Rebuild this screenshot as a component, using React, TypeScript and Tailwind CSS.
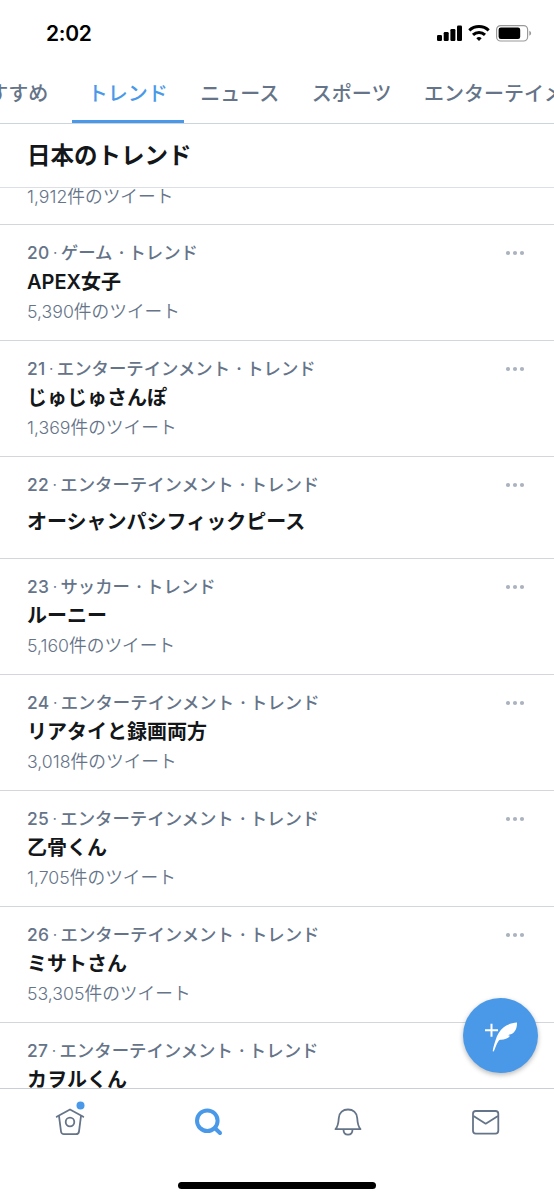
interface Trend {
  rank: number
  category: string
  name: string
  count?: string
}

const TABS = ['おすすめ', 'トレンド', 'ニュース', 'スポーツ', 'エンターテイメント']

const TRENDS: Trend[] = [
  { rank: 20, category: 'ゲーム', name: 'APEX女子', count: '5,390' },
  { rank: 21, category: 'エンターテインメント', name: 'じゅじゅさんぽ', count: '1,369' },
  { rank: 22, category: 'エンターテインメント', name: 'オーシャンパシフィックピース' },
  { rank: 23, category: 'サッカー', name: 'ルーニー', count: '5,160' },
  { rank: 24, category: 'エンターテインメント', name: 'リアタイと録画両方', count: '3,018' },
  { rank: 25, category: 'エンターテインメント', name: '乙骨くん', count: '1,705' },
  { rank: 26, category: 'エンターテインメント', name: 'ミサトさん', count: '53,305' },
  { rank: 27, category: 'エンターテインメント', name: 'カヲルくん', count: '2,480' },
]

// ── Status bar ────────────────────────────────────────────────────────────────

function StatusBar() {
  return (
    <div className="flex h-[66px] shrink-0 items-center justify-between pr-[22px] pl-[46px]">
      <span className="pt-px text-[21px] leading-[28px] font-semibold tracking-[-0.3px] text-black">2:02</span>
      <svg width="96" height="18" viewBox="0 0 96 18" fill="#000">
        <rect x="1" y="11" width="5" height="6" rx="1.2" />
        <rect x="7.7" y="8" width="5" height="9" rx="1.2" />
        <rect x="14.4" y="5" width="5" height="12" rx="1.2" />
        <rect x="21" y="1.5" width="5" height="15.5" rx="1.2" />
        <g fill="none" stroke="#000" strokeWidth="3">
          <path d="M33.3 6.4a14.3 14.3 0 0 1 19.4 0" />
          <path d="M37 10.8a8.8 8.8 0 0 1 12 0" />
        </g>
        <path d="M43 16.9l-2.7-2.7a4.2 4.2 0 0 1 5.4 0z" />
        <rect x="60.6" y="1.6" width="31" height="15.4" rx="4" fill="none" stroke="#999" strokeWidth="1.2" />
        <rect x="62.6" y="3.6" width="21.6" height="11.4" rx="2.2" />
        <path d="M93.3 6.8c1.1.4 1.8 1.4 1.8 2.5s-.7 2.1-1.8 2.5z" fill="#999" />
      </svg>
    </div>
  )
}

// ── Tabs ──────────────────────────────────────────────────────────────────────

function Tabs() {
  return (
    <div className="flex h-[58px] shrink-0 overflow-hidden border-b border-[#cdd4de]">
      <div className="-ml-[48px] flex">
        {TABS.map((tab, i) => (
          <div
            key={tab}
            className={
              i === 1
                ? 'ml-[7px] flex h-[57px] shrink-0 items-center border-b-3 border-[#4a99e9] px-[16.2px] pt-[2px] text-[#4a99e9]'
                : 'flex h-[57px] shrink-0 items-center px-[16.3px] pb-px text-[#657488]'
            }
          >
            <span className="text-[20px] leading-[28px] font-medium whitespace-nowrap">{tab}</span>
          </div>
        ))}
      </div>
    </div>
  )
}

// ── Trend list ────────────────────────────────────────────────────────────────

function CountLine({ count }: { count: string }) {
  return (
    <div className="h-[26px] text-[17.7px] leading-[27px] font-[350] text-[#657488]">
      {count}件のツイート
    </div>
  )
}

function TrendRow({ trend }: { trend: Trend }) {
  return (
    <div className="flex shrink-0 justify-between border-b border-[#d3d7dc] pr-[29px] pl-[27px] pt-[13px] pb-[16px]">
      <div>
        <div className="flex h-[28px] text-[17.4px] leading-[29px] font-medium text-[#657488]">
          <span className="tracking-[0.4px]">{trend.rank}</span>
          <span className="w-[11px] text-center text-[13px]">·</span>
          <span>{trend.category}</span>
          <span className="w-[16px] pl-[2px] text-center font-semibold">·</span>
          <span>トレンド</span>
        </div>
        <div
          className={
            trend.count
              ? 'h-[32px] text-[20px] leading-[33px] font-semibold text-[#14171a]'
              : 'h-[44px] text-[20px] leading-[48px] font-semibold text-[#14171a]'
          }
        >
          {trend.name}
        </div>
        {trend.count && <CountLine count={trend.count} />}
      </div>
      <svg className="mt-[11.5px]" width="20" height="6" viewBox="0 0 20 6" fill="#aab3bf">
        <circle cx="3" cy="3" r="2.1" />
        <circle cx="10" cy="3" r="2.1" />
        <circle cx="17" cy="3" r="2.1" />
      </svg>
    </div>
  )
}

// ── Compose button ────────────────────────────────────────────────────────────

function ComposeButton() {
  return (
    <button className="absolute top-[998px] left-[463px] flex h-[75px] w-[75px] items-center justify-center rounded-full bg-[#4a99e9] shadow-[0_2px_5px_rgba(0,0,0,0.28)]">
      <svg width="36" height="34" viewBox="0 0 36 34">
        <path d="M2 11.200h13M8.500 4.700v13" stroke="#fff" strokeWidth="2" fill="none" />
        <path
          d="M34 3.600C29 3.900 24.500 5.300 21 8C16.500 11.500 14.200 16 12.600 21C11.300 25 10 29 9.700 32.300L10.700 32.600C12 29.500 13.200 25.500 15.700 21.700C16.200 21 16.900 20.700 18 20.700C21.500 20.600 25 19.500 27.200 16.700C26.500 16.800 25.700 16.500 25 16C27.500 15.900 30 14.700 31.500 12.600C33.200 10.200 34.100 7.200 34 3.600Z"
          fill="#fff"
        />
      </svg>
    </button>
  )
}

// ── Bottom navigation ─────────────────────────────────────────────────────────

function BottomNav() {
  return (
    <nav className="flex h-[112px] shrink-0 flex-col border-t border-[#c9cfd9] bg-white">
      <div className="flex h-[59px] items-center justify-around pl-px">
        <svg width="34" height="40" viewBox="0 0 34 40" fill="none" stroke="#657488" strokeWidth="1.8" strokeLinejoin="round" strokeLinecap="round">
          <path d="M3.7 17.8L17 10.5L30.3 17.8" />
          <path d="M6 17L8 32.500Q8.400 35.200 11 35.200H23Q25.600 35.200 26 32.500L28 17" />
          <circle cx="17" cy="23" r="4.3" />
          <circle cx="27.500" cy="6.500" r="4" fill="#4a99e9" stroke="none" />
        </svg>
        <svg width="34" height="40" viewBox="0 0 34 40" fill="none" stroke="#4a99e9" strokeWidth="4" strokeLinecap="round">
          <circle cx="16.300" cy="21.700" r="10.300" />
          <path d="M24 29.200L29 34" />
        </svg>
        <svg width="34" height="40" viewBox="0 0 34 40" fill="none" stroke="#657488" strokeWidth="1.8" strokeLinejoin="round">
          <path d="M5.500 30.200C8 27.500 8.500 23.500 8.800 19C9.200 13.500 13 10.500 18 10.500S26.800 13.500 27.200 19C27.500 23.500 28 27.500 30.500 30.200Z" />
          <path d="M13.500 30.500C13.500 33.700 15.400 35.700 18 35.700S22.500 33.700 22.500 30.500" />
        </svg>
        <svg width="34" height="40" viewBox="0 0 34 40" fill="none" stroke="#657488" strokeWidth="1.8" strokeLinejoin="round">
          <rect x="5" y="12" width="25.3" height="22.6" rx="2.8" />
          <path d="M5.500 17L17.700 24.700L30 17" />
        </svg>
      </div>
      <div className="mx-auto mt-[34px] h-[7px] w-[198px] rounded-full bg-black" />
    </nav>
  )
}

export default function App() {
  return (
    <div className="relative flex h-[1200px] w-[554px] flex-col overflow-hidden bg-white font-['Inter','Noto_Sans_CJK_JP',sans-serif]">
      <StatusBar />
      <Tabs />
      <div className="h-[64px] shrink-0 border-b border-[#dcdfe6] pl-[27px] text-[23.5px] leading-[64px] font-bold text-[#14171a]">
        日本のトレンド
      </div>
      <main className="flex min-h-0 flex-1 flex-col overflow-hidden">
        <div className="-mt-[5px] h-[42px] shrink-0 border-b border-[#d3d7dc] pl-[27px]">
          <CountLine count="1,912" />
        </div>
        {TRENDS.map(trend => (
          <TrendRow key={trend.rank} trend={trend} />
        ))}
      </main>
      <BottomNav />
      <ComposeButton />
    </div>
  )
}
